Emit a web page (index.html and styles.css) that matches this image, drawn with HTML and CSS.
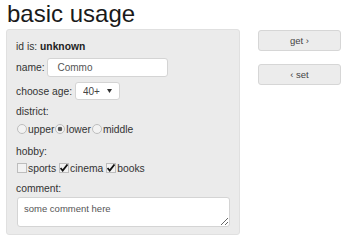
FILE: index.html
```html
<!DOCTYPE html>
<html>
<head>
<meta charset="utf-8">
<link rel="stylesheet" href="styles.css">
</head>
<body>
<h1 class="title">basic usage</h1>
<div class="layout">
  <form class="panel">
    <div class="row">id is: <b>unknown</b></div>
    <label class="row">name: <input class="text-input" type="text" value="Commo"></label>
    <label class="row">choose age: <select class="select"><option>40+</option></select></label>
    <div class="row">district:</div>
    <div class="row options">
      <label class="opt"><input class="radio" type="radio" name="d">upper</label>
      <label class="opt"><input class="radio" type="radio" name="d" checked>lower</label>
      <label class="opt"><input class="radio" type="radio" name="d">middle</label>
    </div>
    <div class="row hobby">hobby:</div>
    <div class="row options checks">
      <label class="opt"><input class="check" type="checkbox">sports</label>
      <label class="opt"><input class="check" type="checkbox" checked>cinema</label>
      <label class="opt"><input class="check" type="checkbox" checked>books</label>
    </div>
    <div class="row comment">comment:</div>
    <textarea class="textarea">some comment here</textarea>
  </form>
  <div class="buttons">
    <button class="btn" type="button">get ›</button>
    <button class="btn" type="button">‹ set</button>
  </div>
</div>
</body>
</html>
```
FILE: styles.css
```css
* { box-sizing: border-box; }
body {
  margin: 0;
  padding: 0 6px;
  font-family: "Liberation Sans", Arial, sans-serif;
  color: #333;
  background: #fff;
}
.title {
  margin: 0;
  padding-left: 1px;
  font-size: 24px;
  font-weight: normal;
  line-height: 28px;
  color: #1a1a1a;
}
.layout {
  display: flex;
  align-items: flex-start;
  margin-top: 1px;
}
.panel {
  width: 234px;
  height: 206px;
  background: #ebebeb;
  border: 1px solid #e0e0e0;
  border-radius: 3px;
  padding: 9px 9px 0 9px;
  display: flex;
  flex-direction: column;
  font-size: 10.3px;
}
.row {
  display: flex;
  align-items: center;
  height: 14px;
  white-space: pre;
}
.row b { color: #222; }
label.row { height: 19px; margin-top: 5px; }
label.row + label.row { margin-top: 5px; height: 18px; }
.text-input {
  margin-left: 0;
  width: 121px;
  height: 19px;
  border: 1px solid #d4d4d4;
  border-radius: 3px;
  background: #fff;
  padding: 0 9px;
  font: 10px "Liberation Sans", Arial, sans-serif;
  color: #555;
}
.select {
  appearance: none;
  -webkit-appearance: none;
  width: 45px;
  height: 18px;
  border: 1px solid #d4d4d4;
  border-radius: 3px;
  padding: 0 0 0 7px;
  font: 10px "Liberation Sans", Arial, sans-serif;
  color: #444;
  background: #fff url("data:image/svg+xml;utf8,<svg xmlns='http://www.w3.org/2000/svg' width='5' height='4'><path d='M0 0h5L2.5 4z' fill='%23333'/></svg>") no-repeat right 7px center;
}
.row.options { margin-top: 4px; }
.row:nth-child(4) { margin-top: 4px; }
.opt {
  display: flex;
  align-items: center;
}
.radio, .check {
  appearance: none;
  -webkit-appearance: none;
  margin: 0 0 0 1px;
  width: 10px;
  height: 10px;
  border: 1px solid #bdbdbd;
  background: #f2f2f2;
}
.radio { border-radius: 50%; margin-right: 1px; }
.radio:checked {
  background: radial-gradient(circle, #555 0 2px, #f2f2f2 2.6px);
}
.check { margin-right: 1px; }
.opt + .opt .check { margin-left: 3px; }
.opt + .opt .radio { margin-left: 1px; }
.check:checked {
  background: #f2f2f2 url("data:image/svg+xml;utf8,<svg xmlns='http://www.w3.org/2000/svg' width='10' height='10'><path d='M1.5 5l2.2 2.5L8.5 1.5' fill='none' stroke='%23111' stroke-width='1.8'/></svg>") no-repeat center / 10px 10px;
}
.row.hobby { margin-top: 8px; }
.row.checks { margin-top: 3px; }
.row.comment { margin-top: 6px; }
.textarea {
  margin: 2px 0 0 1px;
  width: 213px;
  height: 30px;
  border: 1px solid #d4d4d4;
  border-radius: 3px;
  background: #fff;
  padding: 5px 6px;
  font: 9.5px "Liberation Sans", Arial, sans-serif;
  color: #555;
  resize: both;
}
.buttons {
  margin-left: 18px;
  margin-top: 1px;
  display: flex;
  flex-direction: column;
  gap: 13px;
}
.btn {
  width: 83px;
  height: 21px;
  border: 1px solid #d6d6d6;
  border-radius: 3px;
  background: #ececec;
  font: 9.5px "Liberation Sans", Arial, sans-serif;
  color: #444;
  padding: 0;
}
```
